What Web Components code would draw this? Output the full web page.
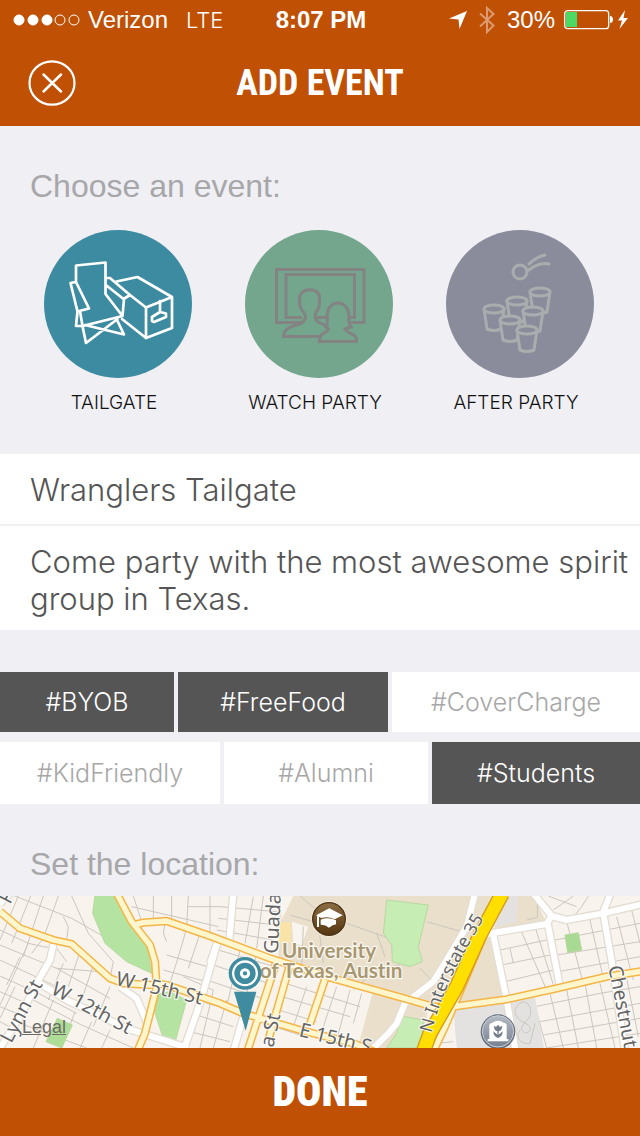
<!DOCTYPE html>
<html lang="en">
<head>
<meta charset="utf-8">
<meta name="viewport" content="width=device-width, initial-scale=1">
<title>Add Event</title>
<style>
  body { margin: 0; background: #efeff4; font-family: "Liberation Sans", Arial, sans-serif; }
</style>
</head>
<body>
<add-event-page></add-event-page>

<template id="status-bar">
  <style>
    :host { display: grid; grid-template-columns: 1fr auto 1fr; align-items: center; height: 40px; padding: 0 11px 0 13px; color: #fff; font-size: 24px; font-family: "Liberation Sans", Arial, sans-serif; }
    .side { display: flex; align-items: center; }
    .net { font-family: Inter, "Liberation Sans", sans-serif; font-weight: 300; font-size: 22px; margin-left: 18px; }
    .dots { margin-right: 8px; }
    .end { justify-content: flex-end; }
    .pct { margin: 0 9px 0 12px; }
    .loc { margin-right: 12px; }
    svg { display: block; }
  </style>
  <div class="side">
    <svg class="dots" width="67" height="12" viewBox="0 0 67 12" fill="#fff" stroke="#fff"><circle cx="6" cy="6" r="5"/><circle cx="20" cy="6" r="5"/><circle cx="34" cy="6" r="5"/><circle cx="47" cy="6" r="5" fill="none"/><circle cx="61" cy="6" r="5" fill="none"/></svg>
    <span>Verizon</span><span class="net">LTE</span>
  </div>
  <b>8:07 PM</b>
  <div class="side end">
    <svg class="loc" width="18" height="18" viewBox="0 0 18 18" fill="#fff"><path d="M18 0 10.500 18 9.500 8.500 0 7.500Z"/></svg>
    <svg width="16" height="28" viewBox="0 0 16 28" fill="none" stroke="#dc9b70" stroke-width="2"><path d="M1 7.500 14.500 19.500 8 26V2l6.500 6L1 20.500"/></svg>
    <span class="pct">30%</span>
    <svg width="65" height="20" viewBox="0 0 65 20"><rect x=".700" y=".700" width="44" height="18" rx="3" fill="none" stroke="#fff" stroke-width="1.300"/><rect x="2" y="2" width="11" height="15" fill="#4cd964"/><path d="M46 6c4 0 4 7 0 7Z" fill="#fff"/><path d="M61 0 54 10.500h4L55.500 19 64 8H59.500Z" fill="#fff"/></svg>
  </div>
</template>

<template id="nav-bar">
  <style>
    :host { display: grid; grid-template-columns: 48px 1fr 48px; align-items: center; height: 86px; padding: 0 28px; color: #fff; }
    button { width: 48px; height: 48px; padding: 0; border: 0; background: none; color: inherit; }
    svg { display: block; }
    h1 { margin: 0; text-align: center; font: bold 36px/44px "Liberation Sans Narrow", "Roboto Condensed", "Liberation Sans", sans-serif; }
  </style>
  <button type="button" aria-label="Close"><svg width="48" height="48" viewBox="0 0 48 48" fill="none" stroke="#fff"><ellipse cx="24" cy="24" rx="22.500" ry="21.700" stroke-width="2.200"/><path d="m15.500 15.500 17.500 17M33 15.500l-17.500 17" stroke-width="2.500" stroke-linecap="round"/></svg></button>
  <h1><slot></slot></h1>
</template>

<template id="event-option">
  <style>
    :host { display: block; width: 148px; }
    button { display: block; width: 100%; padding: 0; border: 0; background: none; color: #111; font: 300 19px/24px Inter, "Liberation Sans", sans-serif; text-align: center; white-space: nowrap; }
    .disc { display: block; height: 148px; margin-bottom: 13px; border-radius: 50%; background: var(--disc); }
    .label { display: block; padding-right: 8px; }
  </style>
  <button type="button"><span class="disc"><slot name="icon"></slot></span><span class="label"><slot></slot></span></button>
</template>

<template id="tag-chip">
  <style>
    :host { display: flex; flex: 1 1 0; min-width: 0; }
    button { flex: 1; padding: 0; border: 0; background: #fff; color: #a7a7a7; font: 300 25px/30px Inter, "Liberation Sans", sans-serif; }
    :host([selected]) button { background: #555; color: #fff; }
  </style>
  <button type="button"><slot></slot></button>
</template>

<template id="event-fields">
  <style>
    :host { display: flex; flex-direction: column; gap: 2px; }
    input, textarea { box-sizing: border-box; display: block; width: 100%; margin: 0; border: 0; border-radius: 0; outline: 0; background: #fff; color: #555; font: 300 31px/37px Inter, "Liberation Sans", sans-serif; }
    input { height: 70px; padding: 0 30px; }
    textarea { height: 104px; padding: 17px 4px 13px 30px; resize: none; overflow: hidden; }
  </style>
  <input aria-label="Event name" value="Wranglers Tailgate">
  <textarea aria-label="Description" rows="2">Come party with the most awesome spirit group in Texas.</textarea>
</template>

<template id="location-map">
  <style>
    :host { display: block; position: relative; height: 152px; overflow: hidden; background: #f8f4ed; }
    svg { display: block; width: 100%; height: 100%; }
    a { position: absolute; left: 22px; bottom: 11px; color: #6d6b66; font: 18px/20px "Liberation Sans", Arial, sans-serif; text-decoration: underline; }
    .minor { fill: none; stroke: #cbc7c0; stroke-width: 3; }
    .edge { fill: none; stroke: #e3ddd3; stroke-width: 26; stroke-linejoin: round; }
    .white { fill: none; stroke: #fff; stroke-width: 18; stroke-linejoin: round; }
    .rim { fill: none; stroke: #f5b546; stroke-width: 25; stroke-linejoin: round; }
    .main { fill: none; stroke: #fff6cd; stroke-width: 16; stroke-linejoin: round; }
    text { font-family: "Noto Sans", "Open Sans", sans-serif; font-size: 59px; fill: #656565; stroke: #fff; stroke-width: 7px; stroke-opacity: .8; paint-order: stroke; stroke-linejoin: round; }
    .road { font-size: 54px; }
    .uni { font-family: Lato, sans-serif; font-weight: bold; font-variant-ligatures: none; fill: #a89770; text-anchor: middle; font-size: 62px; }
  </style>
  <svg viewBox="0 18 1920 456" preserveAspectRatio="xMidYMid slice" role="img" aria-label="Map of Austin">
    <defs>
      <linearGradient id="brown" x2="0" y2="1"><stop stop-color="#8d6d42"/><stop offset="1" stop-color="#543610"/></linearGradient>
      <linearGradient id="slate" x2="0" y2="1"><stop stop-color="#b3bac4"/><stop offset="1" stop-color="#77818f"/></linearGradient>
      <path id="interstate" d="M1295 430Q1325 310 1378 215T1490 20"/>
      <path id="yellow" d="M0 65 60 115 160 150 215 162 330 265 370 280 455 285M350 10 395 95 450 165 465 215 470 290 455 350 435 430 412 484M405 104 430 98 500 93 630 138 810 205 980 260 1230 330 1300 350 1360 350 1520 328 1670 295 1820 260 1930 243M455 278 500 285 660 340 730 370 900 420 1060 460 1120 484M832 205 820 245 742 484M868 230 805 450M975 268 930 402M1465 100 1420 210 1365 340 1335 410 1300 484"/>
      <path id="streets" d="M162 155 150 210 110 280 60 380 0 474M110 275 200 330 380 415 565 474M360 290 410 325 442 400M655 148 600 340 553 474M700 10 688 150M655 148 630 220M730 380 700 484M1425 10 1400 110 1340 210 1300 275 1215 340 1190 400 1165 430 1110 484M1455 133 1640 102 1655 78 1600 10M1655 78 1700 90 1810 70 1930 42M1808 70 1832 10M1810 70 1836 220 1875 484M1643 100 1680 290M1480 135 1520 330 1547 484M0 40 30 10"/>
    </defs>
    <g class="minor">
      <path d="M0 0 100 40 215 85 330 150M55 18 0 150M92 18 35 160M130 18 70 200M175 18 130 145 95 190M215 18 265 130 340 215 330 265M190 80 205 110 200 150M0 120 85 160 130 170M0 165 170 235 330 325M0 210 160 285M0 258 115 310 230 370M0 305 90 345M0 350 75 380M0 395 55 425M60 200 20 285M85 160 0 345M45 290 0 385M240 185 205 290M280 225 245 330M330 290 280 410M190 220 145 330M160 330 100 474M225 365 185 474M275 395 240 474M330 420 305 474M100 330 245 405 400 474M60 400 260 474M130 170 170 175 200 215M170 235 300 245"/>
      <path d="M395 50 655 110M460 18V85M515 18V90M565 18 560 110M630 18V130M565 50H660M400 18 425 95M495 100 490 130 500 155M560 115 535 200M600 130 565 235M500 195 640 235M535 200 510 280M490 240 620 275M550 260 640 300M620 340 735 370M590 375 700 410M570 425 690 455M640 300 600 474M680 330 640 474M760 20 735 160M790 18 770 175M660 50 830 65M655 85 830 105M650 120 820 150M655 180 840 235M640 225 820 285M620 270 800 330M720 180 680 350M770 190 730 350M650 330 740 365M840 275 1080 350M830 315 1050 380M820 355 950 395M790 400 900 435M920 290 880 410M1010 290 960 440M1050 300 1010 450M1085 310 1060 400"/>
      <path d="M1520 90 1610 75M1560 115 1640 300M1605 110 1665 300M1500 180 1640 150M1505 225 1650 195M1515 275 1660 240M1530 175 1540 220M1645 18 1730 50M1660 60 1720 18M1770 10 1745 50 1720 80M1850 80 1900 270M1895 60 1920 160M1700 95 1750 280M1770 90 1810 265M1665 150 1920 100M1670 195 1920 155M1675 245 1920 200M1600 330 1640 474M1650 310 1690 474M1700 300 1735 474M1755 280 1790 474M1800 280 1845 474M1880 265 1915 440M1605 350 1800 310 1920 290M1620 395 1920 340M1630 435 1920 385M1640 474 1920 430M1310 460 1360 455"/>
    </g>
    <path fill="#eadfca" d="M840 18H1485L1345 340 1275 337 1120 300 980 260 915 240 835 200Z"/>
    <path fill="#eadfca" d="M1120 300 1285 340 1270 474H1073ZM1440 130 1478 135 1518 327 1358 343ZM1552 18H1600L1640 98 1475 125Z"/>
    <path fill="#e3e2e1" d="M1500 18H1555L1550 95 1480 112ZM1360 355 1510 333 1545 474H1370ZM1525 330 1605 322 1632 474H1550Z"/>
    <path fill="#f9f4ed" d="M875 95 925 110 905 165 880 160ZM840 18 880 18 845 90Z"/>
    <path fill="#fae3a7" d="M840 97H872V158H836Z"/>
    <g stroke="#b9d8a0" stroke-width="3">
      <path fill="#b5e4a2" d="M285 15H345L390 95 440 160 455 250 380 215 315 160 278 70Z"/>
      <path fill="#b5e4a2" d="M475 312 510 305 560 330 525 458 490 445 465 370Z"/>
      <path fill="#aedd98" d="M172 385 217 405 185 474 138 455Z"/>
      <path fill="#c5edb4" d="M1160 30 1285 45 1255 170 1267 215 1230 230 1177 215 1175 165 1150 130ZM1205 378 1270 390 1265 474H1160L1190 430Z"/>
      <path fill="#a9da94" d="M1695 135 1735 128 1745 180 1703 188Z"/>
    </g>
    <g class="minor"><path d="M870 75 940 95M900 18 950 60M910 110 905 230M1040 100 1160 142M960 140 970 220M1060 300 1130 240 1200 225M1130 130 1155 200M1280 95 1385 125M1260 235 1300 275M1580 90 1612 82V30"/><path d="M1545 360C1560 325 1590 330 1592 365 1594 390 1560 400 1565 420 1580 440 1600 420 1585 405 1555 390 1545 380 1545 360ZM1560 420C1545 440 1560 465 1590 460L1605 400"/></g>
    <use href="#streets" class="edge"/><use href="#streets" class="white"/>
    <use href="#yellow" class="rim"/><use href="#yellow" class="main"/>
    <path fill="none" stroke="#d69a20" stroke-width="46" d="M1507 10 1440 135 1370 290 1290 430 1268 490"/>
    <path fill="none" stroke="#ffdf00" stroke-width="38" d="M1507 10 1440 135 1370 290 1290 430 1268 490"/>
    <text transform="translate(345 284) rotate(13)">W 15th St</text>
    <text transform="translate(150 310) rotate(28)">W 12th St</text>
    <text transform="translate(34 462) rotate(-62)">Lynn St</text>
    <text transform="translate(30 45) rotate(-62)">F</text>
    <text transform="translate(833 192) rotate(-87)">Guada</text>
    <text transform="translate(820 474) rotate(-78)">a St</text>
    <text transform="translate(895 438) rotate(14)">E 15th S</text>
    <text transform="translate(1825 230) rotate(79)">Chestnut</text>
    <text class="road"><textPath href="#interstate">N Interstate 35</textPath></text>
    <text class="uni" x="987" y="205">University</text>
    <text class="uni" x="993" y="263">of Texas, Austin</text>
    <g><circle cx="987" cy="87" r="53" fill="#fff" opacity=".6"/><circle cx="987" cy="87" r="49" fill="url(#brown)" stroke="#4e3415" stroke-width="4"/><path fill="#fff" d="M948 76 988 55 1028 76 1004 88Q985 78 964 84ZM962 89Q984 80 1008 91V103Q998 104 987 113 976 103 962 104ZM951 79H957V111H951Z"/></g>
    <g><circle cx="1494" cy="425" r="52" fill="#66707d"/><circle cx="1494" cy="424" r="47" fill="url(#slate)" stroke="#cbd0d8" stroke-width="3"/><path fill="#fff" d="M1468 405Q1470 399 1476 399 1494 386 1512 399 1519 399 1520 405V447H1525V454H1463V447H1468Z"/><path fill="#737d8a" d="M1482 407 1488 411 1494 404 1500 411 1507 407Q1506 422 1496 424V434L1508 424Q1508 440 1494 444 1480 440 1480 424L1492 434V424Q1482 422 1482 407Z"/></g>
    <g fill="#3f8ba0"><path d="M702 305H769L737 422Z"/><circle cx="735" cy="250" r="44" fill="#fff" fill-opacity=".8" stroke="#3f8ba0" stroke-width="10"/><circle cx="735" cy="250" r="32"/><circle cx="735" cy="250" r="11" fill="none" stroke="#fff" stroke-width="9"/></g>
  </svg>
  <a href="#legal">Legal</a>
</template>

<template id="add-event-page">
  <style>
    :host { display: block; min-height: 100vh; }
    header { background: #bf5004; }
    h2 { margin: 0; padding: 0 30px; color: #a7a7aa; font: 32px/36px "Liberation Sans", Arial, sans-serif; }
    .choose { padding: 42px 0 39px; }
    .choose h2 { margin-bottom: 26px; }
    .options { display: flex; justify-content: space-between; padding: 0 46px 0 44px; }
    .tags { display: flex; flex-direction: column; gap: 10px; padding: 42px 0; }
    .row { display: flex; gap: 4px; height: 60px; }
    .row + .row { height: 62px; }
    .place { padding-bottom: 14px; }
    .done { display: block; width: 100%; height: 88px; padding: 0; border: 0; background: #bf5004; color: #fff; font: 900 42px/44px "Roboto Condensed", "Liberation Sans Narrow", "Liberation Sans", sans-serif; }
    .options svg { display: block; width: 148px; height: 148px; }
  </style>
  <header><status-bar></status-bar><nav-bar>ADD EVENT</nav-bar></header>
  <main>
    <section class="choose">
      <h2>Choose an event:</h2>
      <div class="options">
        <event-option style="--disc:#3d8ba0">TAILGATE<svg slot="icon" viewBox="14 10 148 148" fill="none" stroke="#fff" stroke-width="2.700" stroke-linejoin="round" stroke-linecap="round"><path d="M46 62V45.500L75.500 42.500V74L92.500 96 52.500 106 50 91M45.500 62 40.500 63 47.500 91.500 59 88.500 46 62M77 58H80L100 75 93.500 79 76.500 65.500M94 79 92.500 96M47.500 91.500 46 106H52.500L56 123 87.500 99M55 105 94 114.500 87 100M86.500 61.500 107.500 57 142 77 116 87.500 100 75M116 87.500V118L92 99M142 77V108L116 118M130 81V92M122 97 130 92 136 93.500V97L124 102 122 101Z"/></svg></event-option>
        <event-option style="--disc:#74a58d">WATCH PARTY<svg slot="icon" viewBox="15 10 148 148" fill="none" stroke="#838383" stroke-width="3"><path d="M71 102.500H46.500V49.500H134V102.500H121M72 97.500H56V54.500H124.500V97.500H120M86 97.500H97"/><path d="M90 116.500H53.500C54 107 64 106 71 103.500 76 101 76.500 96 73.500 92 69 88 70 84 69.500 78 70 67 90 67 89.500 78 89.500 84 90 88 86 92 84.500 96 85 100 88 102L97 106"/><path d="M89.500 121.500Q89 115 95 112.500 101 109 96 107 98 103 97 95C98 79 118 79 119 95Q118 103 121 107 116 108 115 109 117 112 122 114 127 116 126.500 121.500Z"/></svg></event-option>
        <event-option style="--disc:#8a8b9b">AFTER PARTY<svg slot="icon" viewBox="16 10 148 148" fill="none" stroke="#aaadad" stroke-width="3" stroke-linecap="round"><circle cx="90" cy="52" r="7"/><path d="M99 44Q106 37 115 35M99 50Q109 42 119 44"/><g id="cups" fill="#8a8b9b"><g transform="translate(110 72)"><path d="M-10 0-7 20Q0 23 7 20L10 0"/><ellipse rx="10" ry="4"/></g><g transform="translate(87 81)"><path d="M-10 0-7 20Q0 23 7 20L10 0"/><ellipse rx="10" ry="4"/></g><g transform="translate(64 89)"><path d="M-10 0-7 20Q0 23 7 20L10 0"/><ellipse rx="10" ry="4"/></g><g transform="translate(103 91)"><path d="M-10 0-7 20Q0 23 7 20L10 0"/><ellipse rx="10" ry="4"/></g><g transform="translate(80 100)"><path d="M-10 0-7 20Q0 23 7 20L10 0"/><ellipse rx="10" ry="4"/></g><g transform="translate(97 110)"><path d="M-10 0-7 20Q0 23 7 20L10 0"/><ellipse rx="10" ry="4"/></g></g></svg></event-option>
      </div>
    </section>
    <event-fields></event-fields>
    <section class="tags">
      <div class="row"><tag-chip selected style="flex-grow:174">#BYOB</tag-chip><tag-chip selected style="flex-grow:210">#FreeFood</tag-chip><tag-chip style="flex-grow:248">#CoverCharge</tag-chip></div>
      <div class="row"><tag-chip style="flex-grow:220">#KidFriendly</tag-chip><tag-chip style="flex-grow:204">#Alumni</tag-chip><tag-chip selected style="flex-grow:208">#Students</tag-chip></div>
    </section>
    <section><h2 class="place">Set the location:</h2><location-map></location-map></section>
  </main>
  <button class="done" type="button">DONE</button>
</template>

<script>
  class TemplateElement extends HTMLElement {
    constructor() {
      super();
      const template = document.getElementById(this.localName);
      this.attachShadow({ mode: "open" }).append(template.content.cloneNode(true));
    }
  }
  class StatusBar extends TemplateElement {}
  class NavBar extends TemplateElement {}
  class EventOption extends TemplateElement {}
  class EventFields extends TemplateElement {}
  class LocationMap extends TemplateElement {}
  class TagChip extends TemplateElement {
    connectedCallback() {
      const button = this.shadowRoot.querySelector("button");
      button.setAttribute("aria-pressed", this.hasAttribute("selected"));
      button.onclick = () => button.setAttribute("aria-pressed", this.toggleAttribute("selected"));
    }
  }
  class AddEventPage extends TemplateElement {}
  customElements.define("status-bar", StatusBar);
  customElements.define("nav-bar", NavBar);
  customElements.define("event-option", EventOption);
  customElements.define("tag-chip", TagChip);
  customElements.define("event-fields", EventFields);
  customElements.define("location-map", LocationMap);
  customElements.define("add-event-page", AddEventPage);
</script>
</body>
</html>
